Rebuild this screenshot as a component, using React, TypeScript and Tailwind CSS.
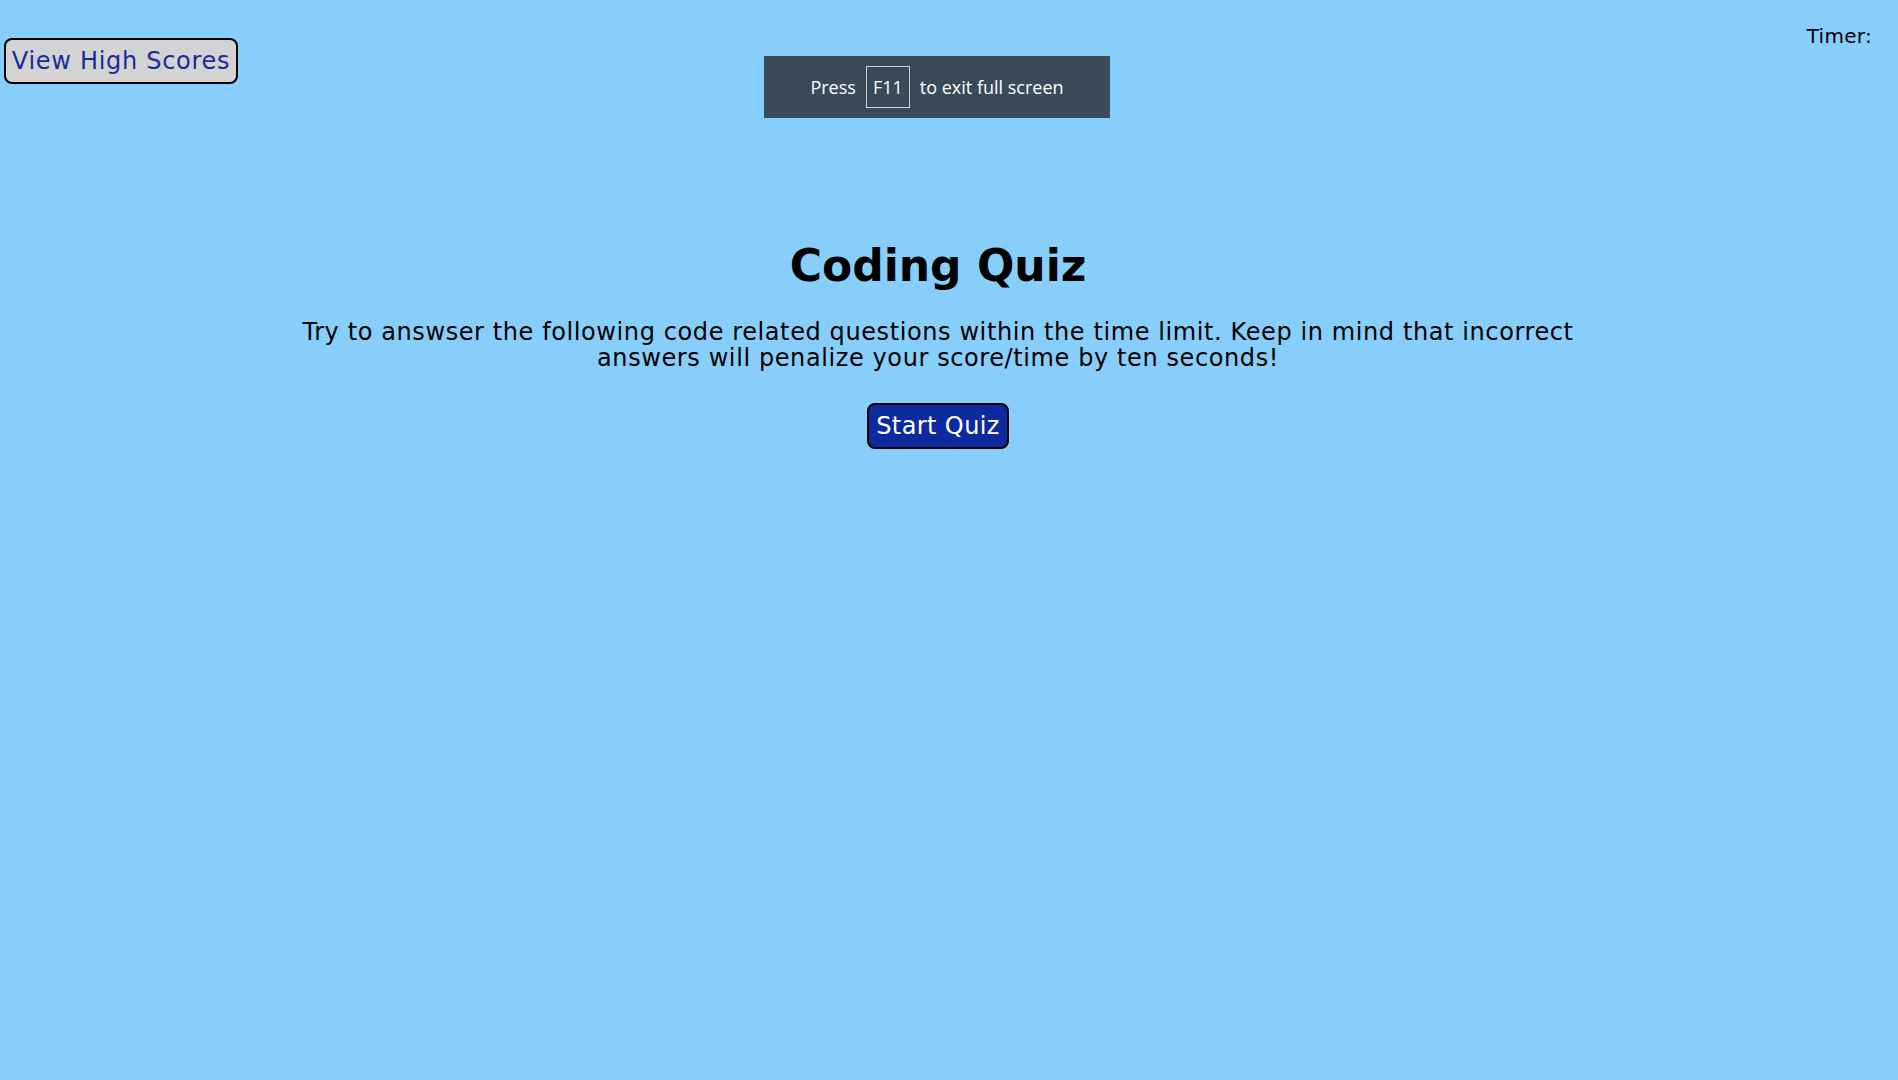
import React from "react";

export default function App() {
  return (
    <div
      className="relative min-h-[1080px] w-full bg-[#87cefa] text-black"
      style={{ fontFamily: '"DejaVu Sans", Verdana, sans-serif' }}
    >
      <header className="flex items-start justify-between">
        <button className="ml-[4px] mt-[38px] h-[46px] w-[234px] rounded-[8px] border-2 border-black bg-[#d3d3d3] text-[24px] tracking-[0.7px] text-[#1a2c9a]">
          View High Scores
        </button>
        <div className="mr-[26px] mt-[21px] text-[20px] tracking-[0.3px]">Timer:</div>
      </header>

      <main className="flex flex-col items-center pr-[22px]">
        <h1 className="mt-[155px] text-[44px] font-bold leading-[54px]">Coding Quiz</h1>
        <p className="mt-[26px] w-[1320px] text-center text-[24px] leading-[26px] tracking-[0.6px]">
          Try to answser the following code related questions within the time limit. Keep in mind that incorrect answers will penalize your score/time by ten seconds!
        </p>
        <button className="mt-[32px] h-[46px] w-[142px] rounded-[8px] border-2 border-black bg-[#0d2b9e] text-[24px] tracking-[0.4px] text-white">
          Start Quiz
        </button>
      </main>

      <div
        className="absolute left-[764px] top-[56px] flex h-[62px] w-[346px] items-center justify-center gap-[10px] bg-[#3b4a59] text-[18px] text-white"
        style={{ fontFamily: '"Open Sans", "Noto Sans", sans-serif' }}
      >
        <span>Press</span>
        <span className="flex h-[42px] w-[44px] items-center justify-center border border-[#d0d4d8]">F11</span>
        <span>to exit full screen</span>
      </div>
    </div>
  );
}
